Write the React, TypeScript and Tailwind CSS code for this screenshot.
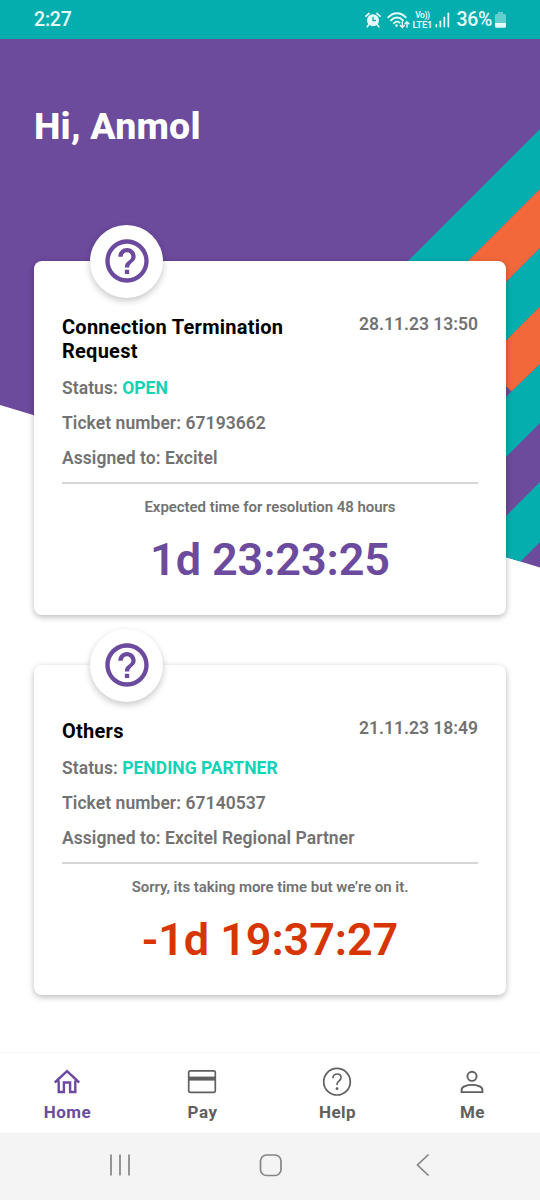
import React from 'react';

interface Ticket {
  title: string;
  date: string;
  status: string;
  number: string;
  assignee: string;
  note: string;
  timer: string;
  timerClass: string;
}

const tickets: Ticket[] = [
  {
    title: 'Connection Termination Request',
    date: '28.11.23 13:50',
    status: 'OPEN',
    number: '67193662',
    assignee: 'Excitel',
    note: 'Expected time for resolution 48 hours',
    timer: '1d 23:23:25',
    timerClass: 'text-[#6c4a9e]',
  },
  {
    title: 'Others',
    date: '21.11.23 18:49',
    status: 'PENDING PARTNER',
    number: '67140537',
    assignee: 'Excitel Regional Partner',
    note: 'Sorry, its taking more time but we’re on it.',
    timer: '-1d 19:37:27',
    timerClass: 'text-[#d73502]',
  },
];

const StatusBar = () => (
  <div className="relative flex h-[39px] shrink-0 items-center bg-[#05aeae] pl-[34px] pr-[34px] text-[#e4fbfa]">
    <span className="text-[19.5px] font-medium leading-none tracking-[-0.2px]">2:27</span>
    <div className="ml-auto flex items-center">
      {/* Alarm */}
      <svg className="h-4 w-4" viewBox="0 0 16 16" fill="none">
        <circle cx="8" cy="8.3" r="6" fill="currentColor" />
        <path d="M1 4.2 4 1.5M15 4.2 12 1.5M3.6 13l-1.4 1.8M12.4 13l1.4 1.8" stroke="currentColor" strokeWidth="1.7" strokeLinecap="round" />
        <path d="M8 4.8v3.7h2.8" stroke="#05aeae" strokeWidth="1.3" />
      </svg>
      {/* Wifi */}
      <svg className="ml-1.5 h-[18px] w-[23px]" viewBox="0 0 23 18" fill="none" stroke="currentColor" strokeLinecap="round">
        <path d="M1.2 6.3C6.5.8 13.5.8 18.8 6.3M4 9.3C7.5 5.6 12.5 5.6 16 9.3M6.9 12.2C8.8 10.3 11.2 10.3 12.5 11.6" strokeWidth="1.9" />
        <circle cx="9.5" cy="14.6" r="1.3" fill="currentColor" stroke="none" />
        <path d="M15.3 10.8v5.4M13.3 14.4l2 2 2-2M20 16.3v-5.4M18 12.8l2-2 2 2" strokeWidth="1.4" />
      </svg>
      <div className="ml-0.5 flex w-5 flex-col items-center text-[8.5px] font-semibold leading-[9px]">
        <span className="tracking-[-0.4px]">Vo))</span>
        <span className="text-[9.5px] tracking-[-0.2px]">LTE1</span>
      </div>
      {/* Signal */}
      <svg className="ml-[3px] h-4 w-[15px]" viewBox="0 0 15 16" fill="currentColor">
        <rect x="0.5" y="12" width="1.7" height="3.5" rx=".8" />
        <rect x="4.5" y="8.5" width="1.7" height="7" rx=".8" />
        <rect x="8.5" y="4.5" width="1.7" height="11" rx=".8" />
        <rect x="12.5" y="0.5" width="1.7" height="15" rx=".8" />
      </svg>
      <span className="ml-[6px] text-[19.5px] font-medium leading-none tracking-[-0.3px]">36%</span>
      <svg className="ml-[3px] mt-px h-4 w-[11px]" viewBox="0 0 11 16" fill="currentColor">
        <path d="M3 0h5v2h1.5A1.5 1.5 0 0 1 11 3.5V11H0V3.5A1.5 1.5 0 0 1 1.5 2H3z" opacity=".42" />
        <path d="M0 11h11v3.2a1.5 1.5 0 0 1-1.5 1.5h-8A1.5 1.5 0 0 1 0 14.2z" />
      </svg>
    </div>
  </div>
);

const HeroBackground = () => (
  <svg className="absolute left-0 top-[39px] h-[529px] w-[540px]" viewBox="0 39 540 529">
    <defs>
      <clipPath id="hero">
        <path d="M0 39H540V567.5L0 405z" />
      </clipPath>
    </defs>
    <g clipPath="url(#hero)">
      <rect y="39" width="540" height="529" fill="#6c4a9c" />
      <path d="M540 129V189L400 329V269z" fill="#05aeae" />
      <path d="M540 189V248L400 388V329z" fill="#f2683a" />
      <path d="M540 248V306.5L400 446.5V388z" fill="#05aeae" />
      <path d="M540 306.5V364L511.5 391.5L490 370V356.5z" fill="#f2683a" />
      <path d="M540 364V423L480 483V422z" fill="#05aeae" />
      <path d="M540 482V542L500 582V522z" fill="#05aeae" />
    </g>
  </svg>
);

const TicketCard = ({ ticket }: { ticket: Ticket }) => (
  <div className="relative rounded-[8px] bg-white px-7 pt-[54px] shadow-[0_2px_6px_rgba(0,0,0,0.28)]">
    <div className="absolute left-14 top-[-36px] flex h-[73px] w-[73px] items-center justify-center rounded-full bg-white shadow-[0_3px_7px_rgba(0,0,0,0.22)]">
      <svg className="mb-px ml-px h-[52px] w-[52px] text-[#6c4a9e]" viewBox="0 0 24 24" fill="currentColor">
        <path d="M11 18h2v-2h-2v2zm1-16C6.48 2 2 6.48 2 12s4.48 10 10 10 10-4.48 10-10S17.52 2 12 2zm0 18c-4.41 0-8-3.59-8-8s3.59-8 8-8 8 3.59 8 8-3.59 8-8 8zm0-14c-2.21 0-4 1.79-4 4h2c0-1.1.9-2 2-2s2 .9 2 2c0 2-3 1.75-3 5h2c0-2.25 3-2.5 3-5 0-2.21-1.79-4-4-4z" />
      </svg>
    </div>

    <div className="flex items-start justify-between">
      <h2 className="w-[250px] text-[20px] font-bold leading-6 tracking-[0.25px] text-black">{ticket.title}</h2>
      <span className="text-[17.5px] font-semibold leading-[18px] text-[#727272]">{ticket.date}</span>
    </div>

    <div className="mt-2 text-[17.5px] font-semibold leading-[35px] tracking-[0.06px] text-[#727272]">
      <p>Status: <span className="font-bold tracking-[0.02px] text-[#12d3b6]">{ticket.status}</span></p>
      <p>Ticket number: {ticket.number}</p>
      <p>Assigned to: {ticket.assignee}</p>
    </div>

    <div className="mt-[6px] border-t-2 border-[#d6d6d6] pb-[29px] pt-[11px] text-center">
      <p className="text-[15px] font-semibold leading-6 tracking-[-0.05px] text-[#727272]">{ticket.note}</p>
      <p className={`mt-[14px] text-[45px] font-semibold leading-[53px] tracking-[-0.1px] ${ticket.timerClass}`}>{ticket.timer}</p>
    </div>
  </div>
);

const NavItem = ({ label, active, children }: { label: string; active?: boolean; children: React.ReactNode }) => (
  <div className={`flex flex-1 flex-col items-center pt-[13px] ${active ? 'text-[#6c4a9e]' : 'text-[#606060]'}`}>
    <svg className="mr-px h-8 w-8" viewBox="0 0 32 32" fill="none" stroke="currentColor">
      {children}
    </svg>
    <span className="mt-1 text-[17px] font-bold leading-5 tracking-[0.5px]">{label}</span>
  </div>
);

const BottomNav = () => (
  <div className="flex h-[81px] shrink-0 border-t border-[#f5f5f5] bg-white">
    <NavItem label="Home" active>
      <path d="M3.8 16.5 16 5.2 28.2 16.5M7.7 14.5V26h5.2v-9.5h6.2V26h5.2V14.5" strokeWidth="2.4" />
    </NavItem>
    <NavItem label="Pay">
      <rect x="2.7" y="4.9" width="26.6" height="21.4" rx="1.5" strokeWidth="1.7" />
      <path d="M3 12.6H29" strokeWidth="4" />
    </NavItem>
    <NavItem label="Help">
      <circle cx="16" cy="15.7" r="13.3" strokeWidth="1.7" />
      <path d="M12 11.8c.2-2.6 1.9-3.8 4.1-3.8 2.3 0 4 1.4 4 3.5 0 3.5-4.1 3.3-4.1 6.9" strokeWidth="1.6" strokeLinecap="round" />
      <circle cx="16" cy="22.7" r="1.4" fill="currentColor" stroke="none" />
    </NavItem>
    <NavItem label="Me">
      <circle cx="16" cy="10.3" r="4.6" strokeWidth="1.9" />
      <path d="M5.6 26.1v-2.5c0-3.3 5.5-4.7 10.4-4.7s10.4 1.4 10.4 4.7v2.5z" strokeWidth="1.9" />
    </NavItem>
  </div>
);

const SystemBar = () => (
  <div className="flex h-[67px] shrink-0 items-center justify-between bg-[#f4f4f4] px-[104px] pb-[3px] text-[#858585]">
    <svg className="h-8 w-8" viewBox="0 0 32 32" fill="none" stroke="currentColor" strokeWidth="1.7">
      <path d="M7 5.5V26.5M16 5.5V26.5M25 5.5V26.5" />
    </svg>
    <svg className="h-8 w-8" viewBox="0 0 32 32" fill="none" stroke="currentColor" strokeWidth="1.7">
      <rect x="6.5" y="6" width="20.5" height="20.5" rx="6" />
    </svg>
    <svg className="h-8 w-8" viewBox="0 0 32 32" fill="none" stroke="currentColor" strokeWidth="1.7">
      <path d="M24.5 5.5 13.5 16 24.5 26.5" />
    </svg>
  </div>
);

export default function App() {
  return (
    <div className="relative flex h-[1200px] w-[540px] flex-col overflow-hidden bg-white font-[Roboto,sans-serif]">
      <HeroBackground />
      <StatusBar />
      <main className="relative flex-1 px-[34px] pt-16">
        <h1 className="text-[37.5px] font-extrabold leading-[46px] tracking-[0.2px] text-white">Hi, Anmol</h1>
        <div className="mt-28 flex flex-col gap-[50px]">
          {tickets.map(ticket => (
            <TicketCard key={ticket.number} ticket={ticket} />
          ))}
        </div>
      </main>
      <BottomNav />
      <SystemBar />
    </div>
  );
}
